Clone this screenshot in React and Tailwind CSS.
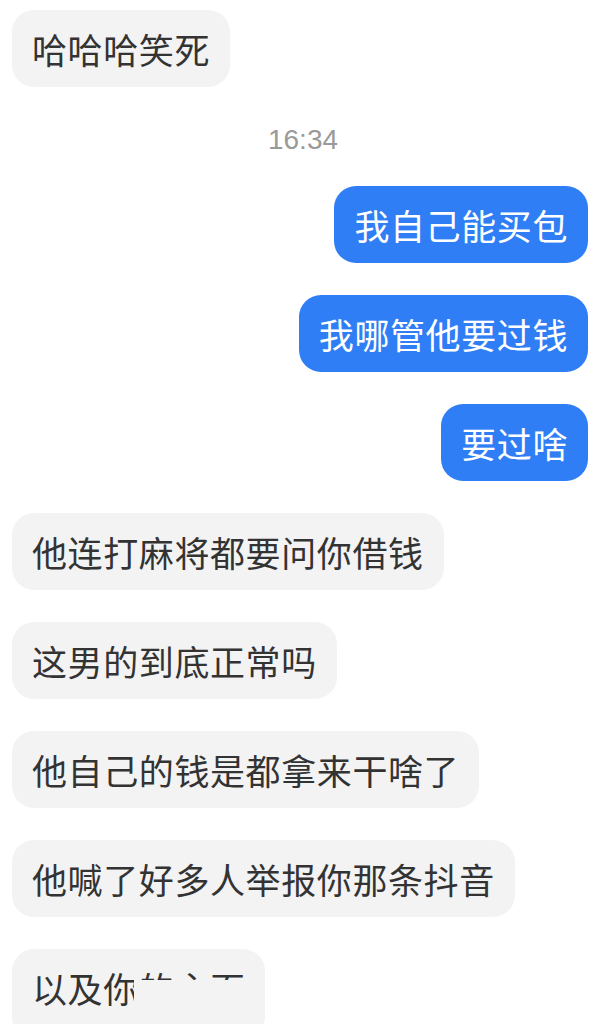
const font = { fontFamily: '"Noto Sans CJK SC", "Noto Sans", sans-serif' };

const messages = [
    { from: 'them', text: '哈哈哈笑死' },
    { time: '16:34' },
    { from: 'me', text: '我自己能买包' },
    { from: 'me', text: '我哪管他要过钱' },
    { from: 'me', text: '要过啥' },
    { from: 'them', text: '他连打麻将都要问你借钱' },
    { from: 'them', text: '这男的到底正常吗' },
    { from: 'them', text: '他自己的钱是都拿来干啥了' },
    { from: 'them', text: '他喊了好多人举报你那条抖音' },
];

const Bubble = ({ from, text }) => (
    <div className={`flex ${from === 'me' ? 'justify-end' : 'justify-start'}`}>
        <div
            className={`px-[20px] py-[17px] rounded-[22px] text-[35px] leading-[43px] tracking-[0.6px] whitespace-nowrap ${from === 'me'
                ? 'bg-[#2f7ef5] text-white'
                : 'bg-[#f3f3f4] text-[#333333]'
                }`}
        >
            {text}
        </div>
    </div>
);

export default function App() {
    return (
        <div className="w-[591px] h-[1024px] overflow-hidden bg-white pt-[10px] pl-[12px] pr-[3px]" style={font}>
            <div className="flex flex-col gap-[32px]">
                {messages.map((m, i) =>
                    m.time ? (
                        <div
                            key={i}
                            className="text-center text-[28px] leading-[30px] text-[#9a9a9a] mt-[6px] -mb-[1px] pl-[6px]"
                            style={{ fontFamily: '"Liberation Sans", Arial, sans-serif' }}
                        >
                            {m.time}
                        </div>
                    ) : (
                        <Bubble key={i} from={m.from} text={m.text} />
                    )
                )}

                {/* last message, cut off by the screenshot edge */}
                <div className="flex justify-start">
                    <div className="relative overflow-hidden px-[20px] pt-[17px] pb-[30px] rounded-[22px] text-[35px] leading-[43px] tracking-[0.6px] whitespace-nowrap bg-[#f3f3f4] text-[#333333] w-[253px]">
                        以及你的主页
                        <div className="absolute left-[122px] top-[31px] w-[125px] h-[60px] bg-[#f3f3f4]" />
                    </div>
                </div>
            </div>
        </div>
    );
}
